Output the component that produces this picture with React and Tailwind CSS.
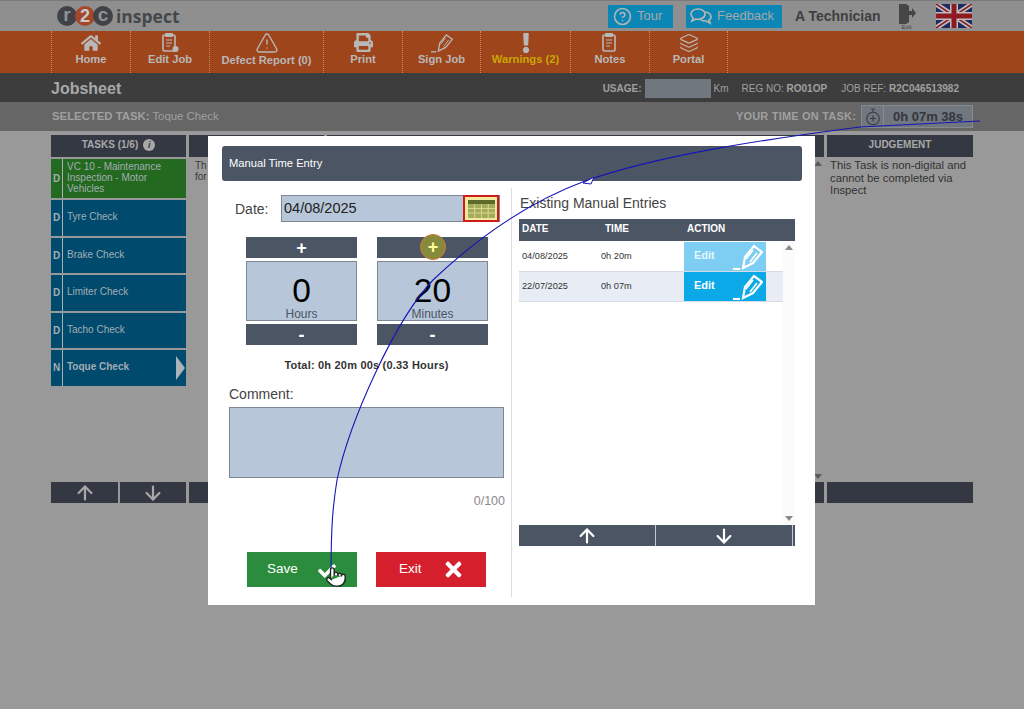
import React from 'react'
import { FaHome, FaPrint, FaExclamation, FaCheck, FaTimes } from 'react-icons/fa'
import { TriangleAlert, Layers, CircleHelp, ArrowUp, ArrowDown, Pointer } from 'lucide-react'

const font = { fontFamily: '"Liberation Sans", Arial, sans-serif' }

function ClipIcon({ badge }) {
    return (
        <svg width="18" height="20" viewBox="0 0 18 20" fill="none" stroke="#b8b8b8" strokeWidth="1.6">
            <rect x="2" y="2" width="12" height="16" rx="1.5" />
            <rect x="5" y="0.8" width="6" height="2.4" fill="#b8b8b8" />
            <path d="M5 7h6M5 10h6M5 13h4" strokeWidth="1.2" />
            {badge && <circle cx="14.5" cy="16" r="3" fill="#b8b8b8" stroke="none" />}
        </svg>
    )
}

function PencilIcon({ color = '#b8b8b8', w = 22, h = 20, sw = 2.2 }) {
    return (
        <svg width={w} height={h} viewBox="0 0 30 26" fill="none" stroke={color} strokeWidth={sw}>
            <path d="M10 24l2-11L21 2l8 6-9 11z" />
            <path d="M20 6l-7 9M24 9l-7 9" strokeWidth={sw * 0.75} />
            <path d="M0 25h7" />
        </svg>
    )
}

const navItems = [
    { label: 'Home', w: 'w-[79px]', icon: <FaHome size={20} color="#b8b8b8" /> },
    { label: 'Edit Job', w: 'w-[79px]', icon: <ClipIcon badge /> },
    { label: 'Defect Report (0)', w: 'w-[114px]', low: true, icon: <TriangleAlert size={24} color="#b8b8b8" strokeWidth={1.4} /> },
    { label: 'Print', w: 'w-[79px]', icon: <FaPrint size={19} color="#b8b8b8" /> },
    { label: 'Sign Job', w: 'w-[78px]', icon: <PencilIcon sw={1.8} /> },
    { label: 'Warnings (2)', w: 'w-[90px]', warn: true, icon: <FaExclamation size={20} color="#b8b8b8" /> },
    { label: 'Notes', w: 'w-[79px]', icon: <ClipIcon /> },
    { label: 'Portal', w: 'w-[79px]', icon: <Layers size={20} color="#b8b8b8" strokeWidth={1.4} /> },
]

const tasks = [
    { code: 'D', name: 'VC 10 - Maintenance Inspection - Motor Vehicles', h: 'h-[39px]', green: true },
    { code: 'D', name: 'Tyre Check', h: 'h-[35.5px]' },
    { code: 'D', name: 'Brake Check', h: 'h-[35.5px]' },
    { code: 'D', name: 'Limiter Check', h: 'h-[35.5px]' },
    { code: 'D', name: 'Tacho Check', h: 'h-[35.5px]' },
    { code: 'N', name: 'Toque Check', h: 'h-[35.5px]', selected: true },
]

function Logo() {
    return (
        <div className="flex items-center">
            <span className="w-[20px] h-[20px] rounded-full bg-[#3f4348] text-[#8f9294] text-[19px] font-bold leading-[18px] text-center">r</span>
            <span className="w-[20px] h-[20px] -ml-[2px] rounded-full bg-[#a5482a] text-[#c9c9c9] text-[18px] font-bold leading-[20px] text-center">2</span>
            <span className="w-[20px] h-[20px] -ml-[2px] rounded-full bg-[#3f4348] text-[#8f9294] text-[19px] font-bold leading-[18px] text-center">c</span>
            <span className="ml-[3px] w-[64px] text-[17.5px] font-bold text-[#44484c]" style={{ fontFamily: '"Open Sans", sans-serif' }}>inspect</span>
        </div>
    )
}

function TopBar() {
    return (
        <div className="h-[31px] bg-[#8f8f8f] border-t border-[#7a7a7a] flex items-center pl-[57px]">
            <Logo />
            <div className="ml-[428px] w-[65px] h-[23px] bg-[#0b86b5] flex items-center pl-[5px] gap-[5px] text-[13px] text-[#a8a8a8]">
                <CircleHelp size={19} color="#b5b5b5" strokeWidth={2} />
                Tour
            </div>
            <div className="ml-[13px] w-[96px] h-[23px] bg-[#0b86b5] flex items-center pl-[4px] gap-[5px] text-[13px] text-[#a8a8a8]">
                <svg width="22" height="17" viewBox="0 0 22 17" fill="none" stroke="#b5b5b5" strokeWidth="1.7">
                    <path d="M8 1c-4 0-7 2-7 5 0 2 1 3 2 4l-1 3 4-2c4 1 9-1 9-5 0-3-3-5-7-5z" />
                    <path d="M15 4c3 0 6 2 6 5 0 1-1 3-2 3l1 3-4-2c-2 0-4 0-5-1" />
                </svg>
                Feedback
            </div>
            <span className="ml-[13px] text-[14px] font-bold text-[#3d3f42]">A Technician</span>
            <div className="ml-[18px] w-[16px] flex flex-col items-center">
                <svg width="18" height="21" viewBox="0 0 18 21" fill="#464646">
                    <path d="M1 1h7l3 2v16l-3 2H1z" />
                    <path d="M11 8h3V5l4 5-4 5v-3h-3z" />
                </svg>
                <span className="text-[6px] leading-[6px] text-[#444]">Exit</span>
            </div>
            <div className="ml-[21px] w-[37px] h-[25px]">
                <svg width="36" height="24" viewBox="0 0 36 24">
                    <rect width="36" height="24" fill="#1f2a5e" />
                    <path d="M0 0l36 24M36 0L0 24" stroke="#bdbdbd" strokeWidth="5" />
                    <path d="M0 0l36 24M36 0L0 24" stroke="#8f1a22" strokeWidth="1.6" />
                    <path d="M18 0v24M0 12h36" stroke="#bdbdbd" strokeWidth="8" />
                    <path d="M18 0v24M0 12h36" stroke="#8f1a22" strokeWidth="5" />
                </svg>
            </div>
        </div>
    )
}

function NavBar() {
    return (
        <div className="h-[42px] bg-[#9f451c] flex pl-[51px]">
            {navItems.map(item => (
                <div key={item.label} className={`${item.w} h-full border-l border-dotted border-[#c98a62] flex flex-col items-center justify-start pt-[2px] last:border-r`}>
                    <div className="h-[19px] flex items-center justify-center">{item.icon}</div>
                    <span className={`text-[11.2px] font-bold leading-[14px] ${item.low ? 'mt-[1px]' : ''} ${item.warn ? 'text-[#c9a700]' : 'text-[#b8b8b8]'}`}>{item.label}</span>
                </div>
            ))}
        </div>
    )
}

function SubHeaders() {
    return (
        <>
            <div className="h-[29px] bg-[#3d3d3d] flex items-center pl-[51px] pr-[65px] pt-[2px]">
                <span className="mt-[1px] text-[16px] font-bold text-[#a8a8a8]">Jobsheet</span>
                <div className="ml-auto flex items-center text-[10px] text-[#a0a0a0]">
                    <span className="font-bold">USAGE:</span>
                    <span className="ml-[3px] w-[66px] h-[19px] bg-[#70777f]" />
                    <span className="ml-[3px]">Km</span>
                    <span className="ml-[13px]">REG NO: <b>RO01OP</b></span>
                    <span className="ml-[14px]">JOB REF: <b>R2C046513982</b></span>
                </div>
            </div>
            <div className="h-[29px] bg-[#666666] flex items-center pl-[52px] pr-[51px] text-[11px] text-[#a0a0a0]">
                <span className="text-[11.35px]"><b>SELECTED TASK:</b> Toque Check</span>
                <div className="ml-auto flex items-center">
                    <span className="font-bold tracking-[0.2px]">YOUR TIME ON TASK:</span>
                    <div className="ml-[5px] w-[112px] h-[23px] bg-[#70777f] border border-[#858a90] flex items-center">
                        <div className="w-[22px] h-full border-r border-[#858a90] flex items-center justify-center">
                            <svg width="16" height="18" viewBox="0 0 16 18" fill="none" stroke="#3a3d42" strokeWidth="1.1">
                                <circle cx="8" cy="10.5" r="6.3" />
                                <path d="M6 1h4M8 1v3M8 7.5v6M5 10.5h6" />
                            </svg>
                        </div>
                        <span className="flex-1 text-center text-[13px] font-bold text-[#33363b]">0h 07m 38s</span>
                    </div>
                </div>
            </div>
        </>
    )
}

function Content() {
    return (
        <div className="flex-1 bg-[#999999] px-[51px] pt-[4px]">
            <div className="flex gap-[3px] h-[347px]">
                <div className="w-[135px]">
                    <div className="h-[22px] bg-[#333842] flex items-center justify-center gap-[5px] pb-[3px] text-[10px] font-bold text-[#a8a8a8]">
                        TASKS (1/6)
                        <span className="w-[12px] h-[12px] rounded-full bg-[#a8a8a8] text-[#333842] text-[9px] italic leading-[12px] text-center">i</span>
                    </div>
                    <div className="mt-[2px] flex flex-col gap-[2px]">
                        {tasks.map(t => (
                            <div key={t.name} className={`${t.h} flex text-[#a3adb3] ${t.green ? 'bg-[#23691f]' : 'bg-[#004a6e]'}`}>
                                <span className="w-[12px] border-r border-[#a8b0b4] flex items-center justify-center text-[10px] font-bold">{t.code}</span>
                                <span className={`flex-1 pl-[4px] pb-[2px] flex items-center text-[10px] leading-[11px] ${t.selected ? 'font-bold' : ''}`}>{t.name}</span>
                                {t.selected && <span className="mr-[1px] self-center w-0 h-0 border-y-[12px] border-y-transparent border-l-[9px] border-l-[#a8b4bb]" />}
                            </div>
                        ))}
                    </div>
                </div>
                <div className="w-[135px]">
                    <div className="h-[22px] bg-[#333842]" />
                    <p className="mt-[2px] pl-[6px] pt-[1px] text-[10px] leading-[11px] text-[#3a3a3a]">Th<br />for</p>
                </div>
                <div className="flex-1 flex flex-col">
                    <div className="h-[22px] bg-[#333842]" />
                    <div className="flex-1 flex flex-col items-end justify-between pt-[4px] pb-[3px] pr-[2px]">
                        <span className="w-0 h-0 border-x-[4px] border-x-transparent border-b-[5px] border-b-[#5a5a5a]" />
                        <span className="w-0 h-0 border-x-[4px] border-x-transparent border-t-[5px] border-t-[#5a5a5a]" />
                    </div>
                </div>
                <div className="w-[146px]">
                    <div className="h-[22px] bg-[#333842] flex items-center justify-center pb-[3px] text-[10px] font-bold text-[#a8a8a8]">JUDGEMENT</div>
                    <p className="mt-[2px] pl-[3px] text-[11.3px] leading-[12.5px] text-[#333]">This Task is non-digital and cannot be completed via Inspect</p>
                </div>
            </div>
            <div className="flex gap-[3px] h-[21px]">
                <div className="w-[67px] bg-[#333842] flex items-center justify-center"><ArrowUp size={22} color="#a8a8a8" strokeWidth={2.4} /></div>
                <div className="w-[66px] -ml-[1px] bg-[#333842] flex items-center justify-center"><ArrowDown size={22} color="#a8a8a8" strokeWidth={2.4} /></div>
                <div className="flex-1 bg-[#333842]" />
                <div className="w-[146px] bg-[#333842]" />
            </div>
        </div>
    )
}

function Stepper({ value, label, highlight }) {
    return (
        <div className="w-[111px]">
            <div className="relative h-[21px] bg-[#4b5563] flex items-center justify-center text-white text-[18px] font-bold leading-none">
                +
                {highlight && (
                    <span className="absolute left-[43px] top-[-3px] w-[26px] h-[26px] rounded-full bg-[#858b3a] border border-[#d9773f] flex items-center justify-center text-[#ffff9c] text-[18px]">+</span>
                )}
            </div>
            <div className="mt-[3px] h-[60px] bg-[#b8c6d9] border border-[#7e8794] flex flex-col items-center">
                <span className="text-[33.5px] leading-[38px] mt-[10px] text-black">{value}</span>
                <span className="text-[12px] leading-[13px] -mt-[2px] text-[#4b5563]">{label}</span>
            </div>
            <div className="mt-[3px] h-[21px] bg-[#4b5563] flex items-center justify-center text-white text-[18px] font-bold leading-none">-</div>
        </div>
    )
}

function EditButton({ light }) {
    return (
        <div className={`w-[82px] h-[29px] flex items-center pl-[10px] pb-[2px] text-[11px] font-bold ${light ? 'bg-[#7dcef2] text-[#e6f6fd]' : 'bg-[#0ba9e8] text-white'}`}>
            Edit
            <span className="ml-auto mr-[3px] mt-[2px]"><PencilIcon color="#ffffff" w={30} h={26} sw={2.2} /></span>
        </div>
    )
}

function LeftPane() {
    return (
        <div className="w-[290px] pl-[7px] pr-[7px] border-r border-[#dddddd] h-[409px]">
            <div className="flex items-center mt-[7px] h-[27px]">
                <span className="ml-[6px] w-[34px] mt-[2px] text-[14px] text-[#444]">Date:</span>
                <div className="ml-[12px] w-[219px] h-[27px] bg-[#b8c6d9] border border-[#7e8794] flex items-center pl-[2px] text-[14.5px] text-[#222]">
                    04/08/2025
                    <div className="ml-auto w-[36px] h-[27px] border-[2px] border-[#d11a1a] bg-[#f0e9a0] flex items-center justify-center">
                        <svg width="27" height="18" viewBox="0 0 27 18">
                            <rect width="27" height="18" rx="1" fill="#a3ab5c" />
                            <rect width="27" height="4" fill="#5d6a2c" />
                            <path d="M0 8.5h27M0 13h27M6.7 4v14M13.5 4v14M20.2 4v14" stroke="#d8d888" strokeWidth="1" />
                        </svg>
                    </div>
                </div>
            </div>
            <div className="mt-[15px] ml-[17px] flex gap-[20px]">
                <Stepper value="0" label="Hours" />
                <Stepper value="20" label="Minutes" highlight />
            </div>
            <p className="mt-[12px] text-center text-[11px] font-bold text-[#333] tracking-[0.2px]">Total: 0h 20m 00s (0.33 Hours)</p>
            <p className="mt-[12px] text-[14px] leading-[16px] text-[#444]">Comment:</p>
            <div className="mt-[5px] w-[275px] h-[71px] bg-[#b8c6d9] border border-[#7e8794]" />
            <p className="mt-[16px] w-[276px] text-right text-[12.5px] leading-[14px] text-[#8a8a8a]">0/100</p>
            <div className="mt-[44px] ml-[18px] flex gap-[19px]">
                <div className="w-[110px] h-[35px] bg-[#2b8c3e] flex items-center pl-[20px] pt-[1px] text-[13.5px] text-white">
                    Save
                    <FaCheck className="ml-[20px] mt-[2px]" size={18} color="#ffffff" />
                </div>
                <div className="w-[110px] h-[35px] bg-[#d61f2c] flex items-center pl-[23px] pt-[1px] text-[13.5px] text-white">
                    Exit
                    <FaTimes className="ml-[20px]" size={23} color="#ffffff" />
                </div>
            </div>
        </div>
    )
}

function RightPane() {
    const rows = [
        { date: '04/08/2025', time: '0h 20m', light: true },
        { date: '22/07/2025', time: '0h 07m' },
    ]
    return (
        <div className="ml-[7px] w-[276px]">
            <p className="mt-[7px] pl-[1px] text-[14px] leading-[16px] text-[#444]">Existing Manual Entries</p>
            <div className="mt-[8px] h-[22px] bg-[#4b5563] flex items-center pb-[3px] text-[10px] font-bold text-white">
                <span className="w-[86px] pl-[3px]">DATE</span>
                <span className="w-[82px]">TIME</span>
                <span>ACTION</span>
            </div>
            <div className="relative h-[284px] flex">
                <div className="w-[264px] pt-[1px]">
                    {rows.map(r => (
                        <div key={r.date} className={`h-[30px] flex items-center text-[9.2px] text-[#333] border-b border-[#d5dbe5] ${r.light ? '' : 'bg-[#e8edf5]'}`}>
                            <span className="w-[82px] pl-[3px]">{r.date}</span>
                            <span className="w-[83px]">{r.time}</span>
                            <EditButton light={r.light} />
                        </div>
                    ))}
                </div>
                <div className="w-[12px] bg-[#fbfbfb] flex flex-col items-center justify-between py-[4px]">
                    <span className="w-0 h-0 border-x-[4px] border-x-transparent border-b-[5px] border-b-[#8a8a8a]" />
                    <span className="w-0 h-0 border-x-[4px] border-x-transparent border-t-[5px] border-t-[#8a8a8a]" />
                </div>
            </div>
            <div className="h-[21px] flex bg-[#4b5563]">
                <div className="w-[137px] border-r border-[#c5cad1] flex items-center justify-center"><ArrowUp size={22} color="#ffffff" strokeWidth={2.4} /></div>
                <div className="w-[137px] border-r border-[#c5cad1] flex items-center justify-center"><ArrowDown size={22} color="#ffffff" strokeWidth={2.4} /></div>
            </div>
        </div>
    )
}

function Modal() {
    return (
        <div className="absolute left-[208px] top-[136px] w-[607px] h-[469px] bg-white px-[14px] pt-[10px]">
            <div className="h-[35px] -mr-[1px] bg-[#4b5563] rounded-[3px] flex items-center pl-[7px] text-[11.2px] text-white">Manual Time Entry</div>
            <div className="flex mt-[7px]">
                <LeftPane />
                <RightPane />
            </div>
        </div>
    )
}

export default function App() {
    return (
        <div className="relative w-[1024px] h-[709px] overflow-hidden flex flex-col bg-[#999999]" style={font}>
            <TopBar />
            <NavBar />
            <SubHeaders />
            <Content />
            <Modal />
            <svg className="absolute left-0 top-0 pointer-events-none" width="1024" height="709" fill="none">
                <path d="M980 121L860 127C760 140 660 155 585 181C520 205 470 245 433 280C395 320 350 420 337 480C333 505 331 525 331 575" stroke="#1616b4" strokeWidth="1.1" />
                <path d="M583 183l11-6-3 7z" stroke="#1616b4" strokeWidth="1" fill="#ffffff" />
            </svg>
            <Pointer className="absolute left-[325px] top-[566px]" size={22} color="#222222" fill="#ffffff" strokeWidth={1.5} />
        </div>
    )
}
